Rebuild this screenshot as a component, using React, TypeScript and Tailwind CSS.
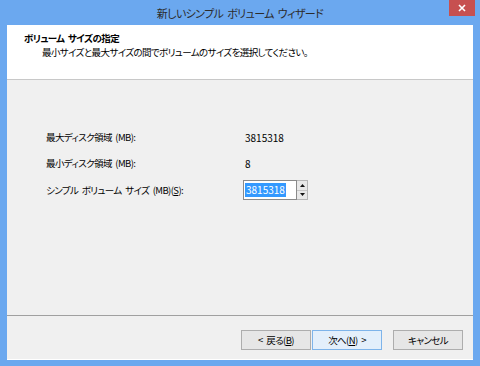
import React from "react";

const font = "font-['Noto_Sans_CJK_JP','Noto_Sans',sans-serif] [font-feature-settings:'palt']";
// Meiryo UI に近い詰め具合
const jp = "text-[9.5px] tracking-[-0.6px] [word-spacing:2px]";

// Win8 風ボタン
const Btn: React.FC<{ label: React.ReactNode; primary?: boolean; className?: string }> = ({ label, primary, className }) => (
  <button
    className={`w-[70px] h-[20px] flex items-center justify-center ${jp} text-black border ${
      primary ? "border-[#7eb4ea] bg-[#e3effb]" : "border-[#adadad] bg-[#e6e6e6]"
    } ${className ?? ""}`}
  >
    {label}
  </button>
);

export default function App() {
  return (
    <div className={`w-[480px] h-[366px] bg-[#6ba8ef] flex flex-col ${font}`}>
      {/* タイトルバー */}
      <div className="relative h-[25px] flex items-center justify-center">
        <span className="text-[11px] tracking-[-0.6px] [word-spacing:2px] text-[#2b2b2b] pt-[1px]">新しいシンプル ボリューム ウィザード</span>
        <div className="absolute top-0 right-[5px] w-[26px] h-[16px] bg-[#c75050] flex items-center justify-center">
          <svg width="8" height="8" viewBox="0 0 8 8">
            <path d="M1 1 L7 7 M7 1 L1 7" stroke="#fff" strokeWidth="1.6" />
          </svg>
        </div>
      </div>

      {/* クライアント領域 */}
      <div className="flex-1 mx-[7px] mb-[7px] bg-[#f0f0f0] flex flex-col">
        <div className="h-[55px] bg-white border-b border-[#c8c8c8] pt-[6px] pl-[17px]">
          <div className={`${jp} font-bold text-black leading-[14px]`}>ボリューム サイズの指定</div>
          <div className={`${jp} text-black leading-[14px] pl-[18px]`}>
            最小サイズと最大サイズの間でボリュームのサイズを選択してください。
          </div>
        </div>

        <div className="flex-1 pl-[39px] pt-[49px] text-[10px] text-black">
          <div className="flex items-center h-[16px]">
            <span className={`w-[199px] ${jp}`}>最大ディスク領域 (MB):</span>
            <span>3815318</span>
          </div>
          <div className="flex items-center h-[16px] mt-[10px]">
            <span className={`w-[199px] ${jp}`}>最小ディスク領域 (MB):</span>
            <span>8</span>
          </div>
          <div className="flex items-center h-[20px] mt-[9px]">
            <span className={`w-[197px] ${jp}`}>
              シンプル ボリューム サイズ (MB)(<span className="underline">S</span>):
            </span>
            <div className="flex h-[20px]">
              <div className="w-[54px] h-[20px] border border-[#8a8a8a] bg-white flex items-center pl-[1px]">
                <span className="bg-[#3399ff] text-white leading-[14px] px-[1px]">3815318</span>
              </div>
              <div className="w-[11px] h-[20px] flex flex-col border border-[#b5b5b5] border-l-0">
                <div className="flex-1 bg-[#e8e8e8] border-b border-[#c5c5c5] flex items-center justify-center">
                  <svg width="5" height="3" viewBox="0 0 5 3"><path d="M2.5 0 L5 3 L0 3 Z" fill="#111" /></svg>
                </div>
                <div className="flex-1 bg-[#e8e8e8] flex items-center justify-center">
                  <svg width="5" height="3" viewBox="0 0 5 3"><path d="M0 0 L5 0 L2.5 3 Z" fill="#111" /></svg>
                </div>
              </div>
            </div>
          </div>
        </div>

        <div className="border-t border-[#a0a0a0] shadow-[0_1px_0_#ffffff] h-[44px] flex items-start justify-end pr-[10px] pt-[14px]">
          <Btn label={<>&lt; 戻る(<span className="underline">B</span>)</>} />
          <Btn label={<>次へ(<span className="underline">N</span>) &gt;</>} primary className="ml-[1px]" />
          <Btn label="キャンセル" className="ml-[11px]" />
        </div>
      </div>
    </div>
  );
}
